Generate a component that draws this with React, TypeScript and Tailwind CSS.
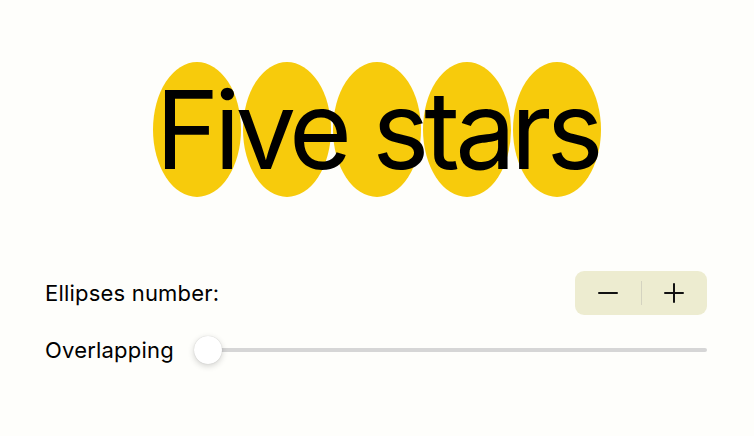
import { useState } from "react";

const App: React.FC = () => {
	const [count, setCount] = useState(5);
	const [overlap] = useState(0);

	const ellipses = Array.from({ length: count });

	return (
		<div
			className="w-[754px] h-[436px] bg-[#fefefb] flex flex-col text-black"
			style={{ fontFamily: "Inter, 'Noto Sans', sans-serif" }}
		>
			{/* Ellipses with title on top */}
			<div className="relative mt-[62px] h-[135px] flex justify-center gap-[2px]">
				{ellipses.map((_, i) => (
					<div
						key={i}
						className="w-[88px] h-[135px] rounded-[50%] bg-[#f7cb0c]"
						style={{ marginLeft: i === 0 ? 0 : -overlap }}
					/>
				))}
				<div className="absolute inset-0 flex items-center justify-center">
					<span className="text-[108px] leading-none tracking-[-5px] font-normal">
						Five stars
					</span>
				</div>
			</div>

			{/* Controls */}
			<div className="mt-[74px] pl-[45px] pr-[47px] flex flex-col">
				<div className="flex items-center justify-between h-[44px]">
					<span className="text-[22px] tracking-[0.2px]">Ellipses number:</span>
					<div className="flex items-center w-[132px] h-[44px] rounded-[9px] bg-[#edecd0]">
						<button
							type="button"
							onClick={() => setCount((c) => Math.max(1, c - 1))}
							className="flex-1 h-full flex items-center justify-center"
						>
							<svg width="20" height="20" viewBox="0 0 20 20">
								<path d="M1 10h18" stroke="#111" strokeWidth="2" strokeLinecap="round" />
							</svg>
						</button>
						<div className="w-px h-[24px] bg-[#d4d3c0]" />
						<button
							type="button"
							onClick={() => setCount((c) => c + 1)}
							className="flex-1 h-full flex items-center justify-center"
						>
							<svg width="20" height="20" viewBox="0 0 20 20">
								<path d="M1 10h18M10 1v18" stroke="#111" strokeWidth="2" strokeLinecap="round" />
							</svg>
						</button>
					</div>
				</div>

				<div className="flex items-center h-[44px] mt-[13px]">
					<span className="text-[22px] tracking-[0.2px] mr-[20px]">Overlapping</span>
					<div className="relative flex-1 h-[30px] flex items-center">
						<div className="w-full h-[4px] rounded-full bg-[#d6d6d6]" />
						<div
							className="absolute top-[1px] w-[28px] h-[28px] rounded-full bg-white shadow-[0_2px_6px_rgba(0,0,0,0.18),0_0_1px_rgba(0,0,0,0.2)]"
							style={{ left: `${overlap}%` }}
						/>
					</div>
				</div>
			</div>
		</div>
	);
};

export default App;
